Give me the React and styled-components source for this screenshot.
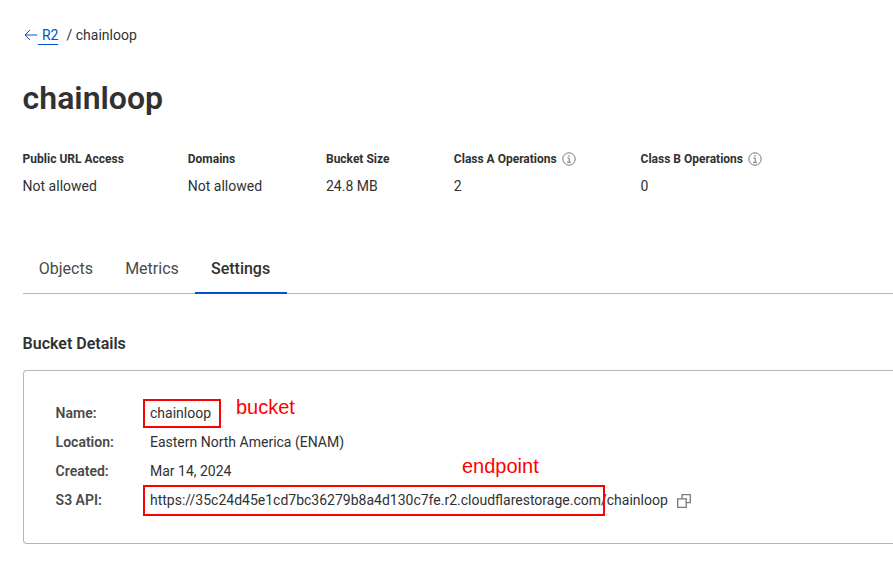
import React from 'react';
import styled, { createGlobalStyle } from 'styled-components';

const Global = createGlobalStyle`
  * { box-sizing: border-box; }
  body { margin: 0; background: #fff; color: #313131; font: 14px/20px Roboto, sans-serif; overflow: hidden; }
`;
const Page = styled.main`height: 566px; padding: 25px 0 0 22.6px; overflow: hidden;`;
const Crumbs = styled.nav`display: flex; align-items: center; height: 20px;`;
const BackLink = styled.a`display: flex; color: #0051c3; text-decoration: none; align-items: center;`;
const BackLabel = styled.span`height: 20px; line-height: 20px; padding: 0 0 0 4px; border-bottom: 1px solid #0051c3;`;
const CrumbTail = styled.span`margin-left: 8px;`;
const Title = styled.h1`margin: 33px 0 0; font-size: 32px; line-height: 40px; font-weight: 600;`;
const Stats = styled.dl`
  display: grid; grid-template-columns: 165.2px 138.2px 127.9px 186.7px 180px; margin: 31px 0 0;
`;
const StatLabel = styled.dt`display: flex; align-items: center; gap: 5.4px; font-size: 12px; font-weight: 700; height: 20px;`;
const StatValue = styled.dd`margin: 7px 0 0;`;
const Tabs = styled.div`display: flex; height: 50px; margin-top: 48px; border-bottom: 1px solid #b6b6b6;`;
const Tab = styled.button`
  border: 0; background: none; padding: 0 ${p => p.$active ? 16.6 : 16}px 0 16.2px; height: 50px; font: ${p => p.$active ? 500 : 400} 16px/50px Roboto, sans-serif;
  color: ${p => p.$active ? '#313131' : '#4a4a4a'}; border-bottom: ${p => p.$active ? '2px solid #0051c3' : '0'};
`;
const Heading = styled.h2`margin: 40px 0 0; font-size: 16px; line-height: 20px; font-weight: 600;`;
const Card = styled.section`
  position: relative; margin-top: 16px; height: 174px; padding: 28px 32px; border: 1px solid #b6b6b6;
  border-right: 0; border-radius: 4px 0 0 4px;
`;
const Row = styled.div`display: grid; grid-template-columns: 94.4px 1fr; height: 29px; line-height: 29px;`;
const Key = styled.span`font-weight: 600; color: #4a4a4a;`;
const Value = styled.span`display: flex; align-items: center; white-space: nowrap;`;
const Mark = styled.div`
  position: absolute; left: ${p => p.$x}px; top: ${p => p.$y}px; width: ${p => p.$w}px; height: ${p => p.$h}px; border: 2px solid #ff0000;
`;
const Note = styled.span`
  position: absolute; left: ${p => p.$x}px; top: ${p => p.$y}px; color: #ff0000; font: 20px/24px "Liberation Sans", sans-serif;
`;
const Svg = styled.svg`display: block; flex: none; margin-left: ${p => p.$gap || 0}px;`;

const Info = () => (
  <Svg width="14" height="14" viewBox="0 0 14 14" fill="none" stroke="#797979">
    <circle cx="7" cy="7" r="6.2" /><path d="M5.3 6h1.9v4M5 10.3h4" /><path d="M6.3 3.9h1.4" strokeWidth="1.4" />
  </Svg>
);
const stats = [
  ['Public URL Access', 'Not allowed'], ['Domains', 'Not allowed'], ['Bucket Size', '24.8 MB'],
  ['Class A Operations', '2', true], ['Class B Operations', '0', true],
];

export default function App() {
  return (
    <Page>
      <Global />
      <Crumbs>
        <BackLink>
          <Svg width="15.4" height="14" viewBox="0 0 15.4 14" fill="none" stroke="#0051c3"><path d="M14.2 7H2.2M6.9 2 2.1 7l4.8 5" /></Svg>
          <BackLabel>R2</BackLabel>
        </BackLink>
        <CrumbTail>/ chainloop</CrumbTail>
      </Crumbs>
      <Title>chainloop</Title>
      <Stats>
        {stats.map(([label, value, info]) => (
          <div key={label}><StatLabel>{label}{info && <Info />}</StatLabel><StatValue>{value}</StatValue></div>
        ))}
      </Stats>
      <Tabs><Tab>Objects</Tab><Tab>Metrics</Tab><Tab $active>Settings</Tab></Tabs>
      <Heading>Bucket Details</Heading>
      <Card>
        <Row><Key>Name:</Key><Value>chainloop</Value></Row>
        <Row><Key>Location:</Key><Value>Eastern North America (ENAM)</Value></Row>
        <Row><Key>Created:</Key><Value>Mar 14, 2024</Value></Row>
        <Row><Key>S3 API:</Key><Value>https://35c24d45e1cd7bc36279b8a4d130c7fe.r2.cloudflarestorage.com/chainloop
          <Svg $gap={9} width="14" height="14" viewBox="0 0 14 14" fill="none" stroke="#797979" strokeWidth="1.3"><path d="M5 4.5V.7h8.3v8H9.5M.7 4.8h8.5v8.5H.7z" /></Svg>
        </Value></Row>
        <Mark $x={119.4} $y={28} $w={78} $h={29} />
        <Note $x={212.4} $y={24}>bucket</Note>
        <Mark $x={119.4} $y={114} $w={462} $h={31} />
        <Note $x={438.4} $y={83}>endpoint</Note>
      </Card>
    </Page>
  );
}
